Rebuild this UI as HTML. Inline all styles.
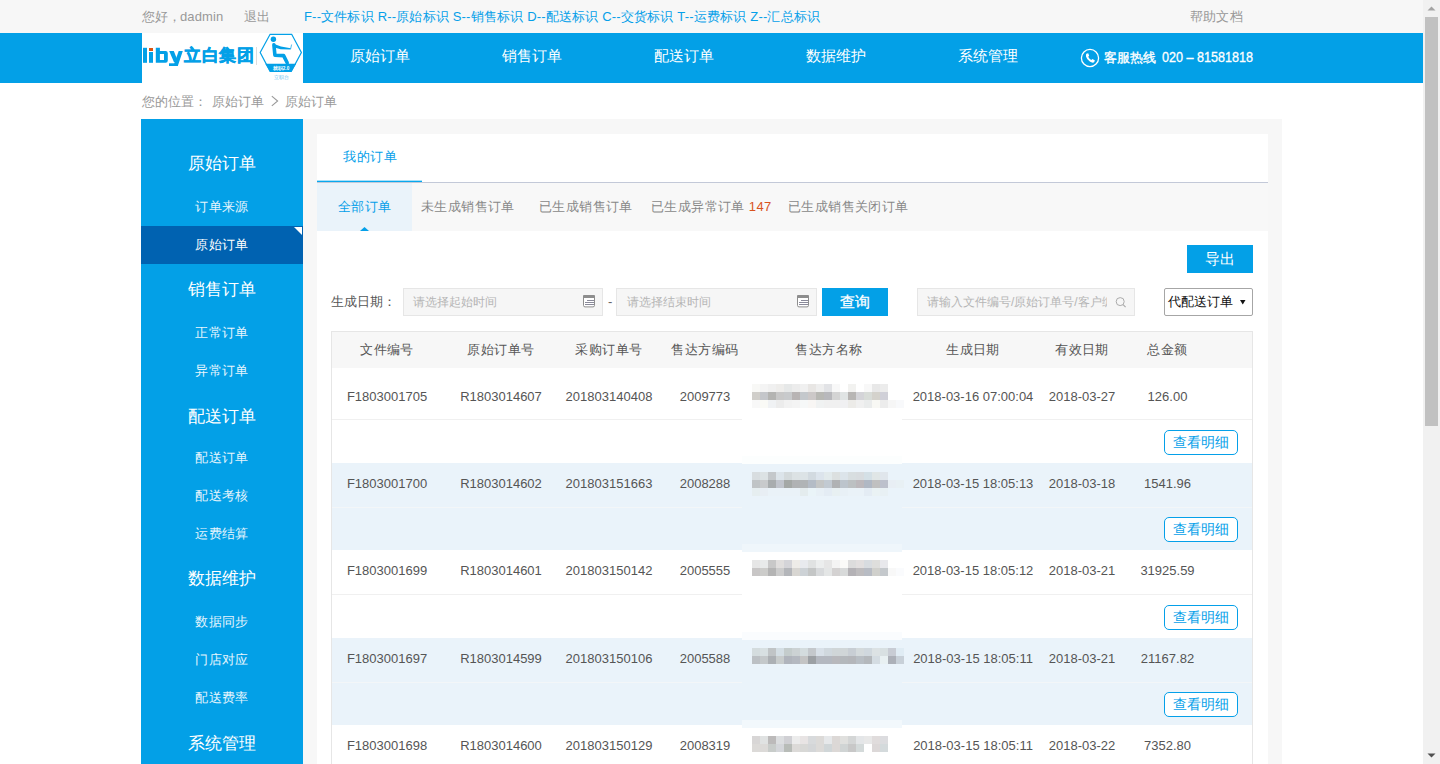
<!DOCTYPE html>
<html><head><meta charset="utf-8">
<style>
*{margin:0;padding:0;box-sizing:border-box}
html,body{width:1440px;height:764px;overflow:hidden;background:#fff;font-family:"Liberation Sans",sans-serif;}
.a{position:absolute;white-space:nowrap;line-height:1}
.b{position:absolute}
#topbar{left:0;top:0;width:1423px;height:33px;background:#f7f7f7}
#nav{left:0;top:33px;width:1423px;height:50px;background:#03a0e7}
#logo{left:142px;top:33px;width:161px;height:50px;background:#fff}
.tt{font-size:13px;color:#999;top:10px;letter-spacing:.18px}
.navi{font-size:15px;color:#fff;top:48px}
.crumb{font-size:13px;color:#999;top:95px}
#side{left:141px;top:119px;width:162px;height:645px;background:#03a0e7}
#main{left:303px;top:119px;width:979px;height:645px;background:#f7f7f7}
#panel{left:317px;top:134px;width:951px;height:630px;background:#fff}
.sh{font-size:17px;color:#fff;left:141px;width:162px;text-align:center}
.si{font-size:13px;color:#e6f5fd;left:141px;width:162px;text-align:center;letter-spacing:.3px}
#scroll{left:1423px;top:0;width:17px;height:764px;background:#f1f1f1}
.st{font-size:13px;color:#888;top:200px;letter-spacing:.4px}
.inp{background:#f6f6f6;border:1px solid #e6e6e6;height:28px;top:288px}
.ph{font-size:12px;color:#b5b5b5;top:296px}
.th{font-size:13px;color:#555;top:343px;text-align:center;letter-spacing:.45px}
.td{font-size:13px;color:#555;text-align:center}
.btn2{left:1164px;width:74px;height:25px;border:1px solid #05a0e9;border-radius:5px;color:#05a0e9;font-size:14px;line-height:23px;text-align:center;background:#fff}
.mz{position:absolute;width:8px;height:8px}
</style></head><body>
<div class="b" id="topbar"></div>
<div class="a tt" style="left:142px">您好，</div><div class="a tt" style="left:180px;letter-spacing:.1px">dadmin</div>
<div class="a tt" style="left:244px">退出</div>
<div class="a tt" style="left:304px;color:#05a0e9">F--文件标识 R--原始标识 S--销售标识 D--配送标识 C--交货标识 T--运费标识 Z--汇总标识</div>
<div class="a tt" style="left:1190px">帮助文档</div>

<div class="b" id="nav"></div>
<div class="b" id="logo"></div>
<svg class="b" style="left:140px;top:42px" width="45" height="28" viewBox="140 42 45 28">
<rect x="143" y="47.8" width="4" height="15" fill="#03a0e7"/>
<rect x="149" y="52" width="4" height="10.8" fill="#03a0e7"/>
<rect x="149" y="48" width="4" height="3" fill="#dd5410"/>
<path d="M155.8 47.8 H159.9 V51 H165.6 Q167.8 51 167.8 53.2 V60.6 Q167.8 62.8 165.6 62.8 H155.8 Z M159.9 54 V59.9 H164 V54 Z" fill="#03a0e7" fill-rule="evenodd"/>
<polygon points="169.2,51 173.8,51 178.3,62.3 174,62.3" fill="#03a0e7"/>
<polygon points="178.7,51 182.8,51 177.8,66 173.4,66" fill="#03a0e7"/>
<rect x="169" y="63.3" width="8.5" height="2.7" fill="#03a0e7"/>
</svg>
<div class="a" style="left:184px;top:46.5px;font-size:16.5px;font-weight:900;color:#03a0e7;letter-spacing:.6px;-webkit-text-stroke:.55px #03a0e7">立白集团</div>
<div class="b" style="left:256px;top:47px;width:1px;height:18px;background:#ddd"></div>
<svg class="b" style="left:255px;top:30px" width="50" height="55" viewBox="255 30 50 55">
<polygon points="270.1,34.3 291.7,34.3 301.4,52.5 291.3,71.4 270.1,71.4 260.2,52.5" fill="none" stroke="#03a0e7" stroke-width="1.2"/>
<polygon points="265.2,63.8 296.2,63.8 291.3,71.4 270.1,71.4" fill="#03a0e7"/>
<circle cx="273.4" cy="39.2" r="2.7" fill="#03a0e7"/>
<polyline points="273.9,44.8 274.9,55.2 283.6,55.6 287.2,62.8" fill="none" stroke="#03a0e7" stroke-width="3.6" stroke-linejoin="round" stroke-linecap="round"/>
<polygon points="273.5,43.8 281,46.6 290.6,48.2 290.8,49.6 280.6,49.2 274.5,47.4" fill="#03a0e7"/>
<line x1="290.6" y1="49" x2="291.6" y2="44.5" stroke="#03a0e7" stroke-width="0.7"/>
<text x="281" y="69.6" font-size="4.6" fill="#fff" text-anchor="middle" font-family="Liberation Sans" font-weight="bold">就职2.0</text>
<text x="281" y="79.4" font-size="5" fill="#5bbcef" text-anchor="middle" font-family="Liberation Sans">立职台</text>
</svg>

<div class="a navi" style="left:350px">原始订单</div>
<div class="a navi" style="left:502px">销售订单</div>
<div class="a navi" style="left:654px">配送订单</div>
<div class="a navi" style="left:806px">数据维护</div>
<div class="a navi" style="left:958px">系统管理</div>
<svg class="b" style="left:1080px;top:48px" width="20" height="20" viewBox="0 0 20 20">
<circle cx="10" cy="10" r="8.6" fill="none" stroke="#fff" stroke-width="1.3"/>
<path d="M6.3 5.8 L8.2 5.2 L9.2 7.8 L8.2 8.7 Q9.3 11 11.3 12 L12.3 11 L14.8 12.2 L14.2 14.2 Q12.5 15.3 9.8 13.6 Q6.8 11.5 6 8.5 Q5.8 6.8 6.3 5.8 Z" fill="#fff"/>
</svg>
<div class="a" style="left:1104px;top:51px;font-size:13px;color:#fff;-webkit-text-stroke:.35px #fff">客服热线</div>
<div class="a" style="left:1162px;top:50px;font-size:14px;color:#fff;transform:scaleX(.9);transform-origin:left;-webkit-text-stroke:.3px #fff">020 – 81581818</div>

<div class="a crumb" style="left:142px">您的位置：</div>
<div class="a crumb" style="left:212px">原始订单</div>
<svg class="b" style="left:270px;top:94px" width="10" height="14"><polyline points="1.8,2.2 7.6,7 1.8,11.8" fill="none" stroke="#999" stroke-width="1.1"/></svg>
<div class="a crumb" style="left:285px">原始订单</div>

<div class="b" id="side"></div>
<div class="a sh" style="top:155px">原始订单</div>
<div class="a si" style="top:200px">订单来源</div>
<div class="b" style="left:141px;top:226px;width:162px;height:38px;background:#0062b1"></div>
<svg class="b" style="left:294px;top:227px" width="8" height="8"><polygon points="0,0 8,0 8,8" fill="#fff"/></svg>
<div class="a si" style="top:238px;color:#fff">原始订单</div>
<div class="a sh" style="top:280.5px">销售订单</div>
<div class="a si" style="top:326px">正常订单</div>
<div class="a si" style="top:364px">异常订单</div>
<div class="a sh" style="top:407.5px">配送订单</div>
<div class="a si" style="top:451px">配送订单</div>
<div class="a si" style="top:489px">配送考核</div>
<div class="a si" style="top:527px">运费结算</div>
<div class="a sh" style="top:570px">数据维护</div>
<div class="a si" style="top:615px">数据同步</div>
<div class="a si" style="top:653px">门店对应</div>
<div class="a si" style="top:691px">配送费率</div>
<div class="a sh" style="top:734.5px">系统管理</div>

<div class="b" id="main"></div>
<div class="b" id="panel"></div>
<!-- tabs -->
<div class="a" style="left:343px;top:150px;font-size:13px;color:#05a0e9;letter-spacing:.5px">我的订单</div>
<div class="b" style="left:317px;top:182px;width:951px;height:1px;background:#c3c9d8"></div>
<div class="b" style="left:317px;top:181px;width:105px;height:1px;background:#08a8ee"></div><div class="b" style="left:317px;top:180px;width:105px;height:1px;background:#08a8ee;opacity:.35"></div>
<div class="b" style="left:317px;top:183px;width:951px;height:48px;background:#f8f8f8"></div>
<div class="b" style="left:317px;top:183px;width:95px;height:48px;background:#eaf3fa"></div>
<svg class="b" style="left:360px;top:227px" width="9" height="4"><polygon points="0,4 4.5,0 9,4" fill="#05a0e9"/></svg>
<div class="a st" style="left:338px;color:#05a0e9">全部订单</div>
<div class="a st" style="left:421px">未生成销售订单</div>
<div class="a st" style="left:539px">已生成销售订单</div>
<div class="a st" style="left:651px">已生成异常订单 <span style="color:#d9531e">147</span></div>
<div class="a st" style="left:788px">已生成销售关闭订单</div>

<!-- toolbar -->
<div class="a" style="left:1187px;top:245px;width:66px;height:28px;background:#03a0e7;color:#fff;font-size:15px;line-height:28px;text-align:center">导出</div>
<div class="a" style="left:331px;top:295px;font-size:13px;color:#555">生成日期：</div>
<div class="b inp" style="left:403px;width:200px"></div>
<div class="a ph" style="left:413px">请选择起始时间</div>
<div class="b inp" style="left:616px;width:201px"></div>
<div class="a ph" style="left:627px">请选择结束时间</div>
<div class="a" style="left:608px;top:295px;font-size:13px;color:#666">-</div>
<svg class="b" style="left:582px;top:294px" width="14" height="14" viewBox="0 0 14 14"><rect x="1.5" y="1.5" width="11" height="11.4" rx="1.5" fill="#fff" stroke="#8e8e8e" stroke-width="1"/><rect x="1" y="1" width="12" height="3" rx="1" fill="#8e8e8e"/><g fill="#8a8a9a"><rect x="5" y="6" width="7" height="1"/><rect x="3" y="8" width="9" height="1"/><rect x="3" y="10" width="9" height="1"/></g></svg>
<svg class="b" style="left:796px;top:294px" width="14" height="14" viewBox="0 0 14 14"><rect x="1.5" y="1.5" width="11" height="11.4" rx="1.5" fill="#fff" stroke="#8e8e8e" stroke-width="1"/><rect x="1" y="1" width="12" height="3" rx="1" fill="#8e8e8e"/><g fill="#8a8a9a"><rect x="5" y="6" width="7" height="1"/><rect x="3" y="8" width="9" height="1"/><rect x="3" y="10" width="9" height="1"/></g></svg>
<div class="a" style="left:822px;top:288px;width:66px;height:28px;background:#03a0e7;color:#fff;font-size:15px;line-height:28px;text-align:center;-webkit-text-stroke:.3px #fff">查询</div>
<div class="b inp" style="left:917px;width:218px"></div>
<div class="a ph" style="left:927px;width:180px;overflow:hidden">请输入文件编号/原始订单号/客户编号</div>
<svg class="b" style="left:1115px;top:296px" width="12" height="12" viewBox="0 0 12 12"><circle cx="5.2" cy="5.6" r="4" fill="none" stroke="#ababab" stroke-width="1"/><line x1="8.1" y1="8.6" x2="10.6" y2="11.2" stroke="#ababab" stroke-width="1.2"/></svg>
<div class="b" style="left:1164px;top:288px;width:89px;height:28px;border:1px solid #a6a6a6;border-radius:2px;background:#fff"></div>
<div class="a" style="left:1168px;top:295px;font-size:13px;color:#111">代配送订单</div>
<svg class="b" style="left:1240px;top:300px" width="6" height="5"><polygon points="0,0 5.5,0 2.75,4.5" fill="#111"/></svg>

<!-- table -->
<div class="b" style="left:331px;top:331px;width:922px;height:433px;border:1px solid #e6e6e6;border-bottom:none;background:#fff"></div>
<div class="b" style="left:332px;top:332px;width:920px;height:36px;background:#f7f7f7"></div>
<div id="rows">
<div class="a th" style="left:307.0px;width:160px">文件编号</div>
<div class="a th" style="left:421.0px;width:160px">原始订单号</div>
<div class="a th" style="left:529.0px;width:160px">采购订单号</div>
<div class="a th" style="left:625.0px;width:160px">售达方编码</div>
<div class="a th" style="left:749.0px;width:160px">售达方名称</div>
<div class="a th" style="left:893.0px;width:160px">生成日期</div>
<div class="a th" style="left:1002.0px;width:160px">有效日期</div>
<div class="a th" style="left:1087.5px;width:160px">总金额</div>
<div class="b" style="left:332px;top:368px;width:920px;height:95px;background:#fff"></div>
<div class="b" style="left:332px;top:419px;width:920px;height:1px;background:#f0f0f0"></div>
<div class="a btn2" style="top:430px">查看明细</div>
<div class="a td" style="left:307.0px;width:160px;top:390px">F1803001705</div>
<div class="a td" style="left:421.0px;width:160px;top:390px">R1803014607</div>
<div class="a td" style="left:529.0px;width:160px;top:390px">201803140408</div>
<div class="a td" style="left:625.0px;width:160px;top:390px">2009773</div>
<div class="a td" style="left:893.0px;width:160px;top:390px">2018-03-16 07:00:04</div>
<div class="a td" style="left:1002.0px;width:160px;top:390px">2018-03-27</div>
<div class="a td" style="left:1087.5px;width:160px;top:390px">126.00</div>
<div class="b" style="left:742px;top:368px;width:160px;height:95px;background:#fff"></div>
<div class="mz" style="left:752px;top:384px;background:#f8f8f6"></div>
<div class="mz" style="left:760px;top:384px;background:#f4f4f4"></div>
<div class="mz" style="left:768px;top:384px;background:#f0f0f0"></div>
<div class="mz" style="left:776px;top:384px;background:#eeedeb"></div>
<div class="mz" style="left:784px;top:384px;background:#e6e8e8"></div>
<div class="mz" style="left:792px;top:384px;background:#ececec"></div>
<div class="mz" style="left:800px;top:384px;background:#f0f0f0"></div>
<div class="mz" style="left:808px;top:384px;background:#e8e6e4"></div>
<div class="mz" style="left:816px;top:384px;background:#eeeeee"></div>
<div class="mz" style="left:824px;top:384px;background:#e2e3e6"></div>
<div class="mz" style="left:832px;top:384px;background:#f8f8f8"></div>
<div class="mz" style="left:840px;top:384px;background:#ffffff"></div>
<div class="mz" style="left:848px;top:384px;background:#f2f2f0"></div>
<div class="mz" style="left:856px;top:384px;background:#ffffff"></div>
<div class="mz" style="left:864px;top:384px;background:#f8f8f8"></div>
<div class="mz" style="left:872px;top:384px;background:#e8e8e8"></div>
<div class="mz" style="left:880px;top:384px;background:#ececec"></div>
<div class="mz" style="left:752px;top:392px;background:#d0ceca"></div>
<div class="mz" style="left:760px;top:392px;background:#c4c6ca"></div>
<div class="mz" style="left:768px;top:392px;background:#b4b4b2"></div>
<div class="mz" style="left:776px;top:392px;background:#c8c8c8"></div>
<div class="mz" style="left:784px;top:392px;background:#c8cacc"></div>
<div class="mz" style="left:792px;top:392px;background:#b8b4b4"></div>
<div class="mz" style="left:800px;top:392px;background:#c4c8cc"></div>
<div class="mz" style="left:808px;top:392px;background:#ccc8c8"></div>
<div class="mz" style="left:816px;top:392px;background:#b8b8b4"></div>
<div class="mz" style="left:824px;top:392px;background:#b8b8bc"></div>
<div class="mz" style="left:832px;top:392px;background:#d4d4d4"></div>
<div class="mz" style="left:840px;top:392px;background:#e0e4e4"></div>
<div class="mz" style="left:848px;top:392px;background:#b8b6b4"></div>
<div class="mz" style="left:856px;top:392px;background:#d4d4d8"></div>
<div class="mz" style="left:864px;top:392px;background:#d8dcd8"></div>
<div class="mz" style="left:872px;top:392px;background:#d4d2cc"></div>
<div class="mz" style="left:880px;top:392px;background:#d0d0d8"></div>
<div class="mz" style="left:752px;top:400px;background:#f8f8f8"></div>
<div class="mz" style="left:760px;top:400px;background:#fafaf6"></div>
<div class="mz" style="left:768px;top:400px;background:#f0f2f4"></div>
<div class="mz" style="left:776px;top:400px;background:#ececec"></div>
<div class="mz" style="left:784px;top:400px;background:#f2f2f2"></div>
<div class="mz" style="left:792px;top:400px;background:#f4f4f4"></div>
<div class="mz" style="left:800px;top:400px;background:#f6f8f8"></div>
<div class="mz" style="left:808px;top:400px;background:#f8f6f4"></div>
<div class="mz" style="left:816px;top:400px;background:#f0f2f2"></div>
<div class="mz" style="left:824px;top:400px;background:#f0f0f0"></div>
<div class="mz" style="left:832px;top:400px;background:#f0f0f0"></div>
<div class="mz" style="left:840px;top:400px;background:#f0f0f2"></div>
<div class="mz" style="left:848px;top:400px;background:#ecebe8"></div>
<div class="mz" style="left:856px;top:400px;background:#f0f0f0"></div>
<div class="mz" style="left:864px;top:400px;background:#eaecec"></div>
<div class="mz" style="left:872px;top:400px;background:#f8f8f4"></div>
<div class="mz" style="left:880px;top:400px;background:#ececec"></div>
<div class="mz" style="left:888px;top:400px;background:#f6f6f6"></div>
<div class="mz" style="left:896px;top:400px;background:#f8f9fb"></div>
<div class="b" style="left:332px;top:463px;width:920px;height:87px;background:#eaf3fa"></div>
<div class="b" style="left:332px;top:507px;width:920px;height:1px;background:#f3f6f8"></div>
<div class="a btn2" style="top:517px">查看明细</div>
<div class="a td" style="left:307.0px;width:160px;top:477px">F1803001700</div>
<div class="a td" style="left:421.0px;width:160px;top:477px">R1803014602</div>
<div class="a td" style="left:529.0px;width:160px;top:477px">201803151663</div>
<div class="a td" style="left:625.0px;width:160px;top:477px">2008288</div>
<div class="a td" style="left:893.0px;width:160px;top:477px">2018-03-15 18:05:13</div>
<div class="a td" style="left:1002.0px;width:160px;top:477px">2018-03-18</div>
<div class="a td" style="left:1087.5px;width:160px;top:477px">1541.96</div>
<div class="b" style="left:742px;top:463px;width:160px;height:87px;background:#eaf3fa"></div>
<div class="mz" style="left:752px;top:472px;background:#d8dde0"></div>
<div class="mz" style="left:760px;top:472px;background:#dce2e4"></div>
<div class="mz" style="left:768px;top:472px;background:#c4c8cb"></div>
<div class="mz" style="left:776px;top:472px;background:#dce4ea"></div>
<div class="mz" style="left:784px;top:472px;background:#d4dadc"></div>
<div class="mz" style="left:792px;top:472px;background:#dce2e4"></div>
<div class="mz" style="left:800px;top:472px;background:#dce3e6"></div>
<div class="mz" style="left:808px;top:472px;background:#d2dae0"></div>
<div class="mz" style="left:816px;top:472px;background:#dce4ec"></div>
<div class="mz" style="left:824px;top:472px;background:#e2eaec"></div>
<div class="mz" style="left:832px;top:472px;background:#dce0e0"></div>
<div class="mz" style="left:840px;top:472px;background:#dce4ea"></div>
<div class="mz" style="left:848px;top:472px;background:#d8dee0"></div>
<div class="mz" style="left:856px;top:472px;background:#d8dcdf"></div>
<div class="mz" style="left:864px;top:472px;background:#d4e0e6"></div>
<div class="mz" style="left:872px;top:472px;background:#e0e6e6"></div>
<div class="mz" style="left:880px;top:472px;background:#e0e6ec"></div>
<div class="mz" style="left:752px;top:480px;background:#c0c4c6"></div>
<div class="mz" style="left:760px;top:480px;background:#c8cacc"></div>
<div class="mz" style="left:768px;top:480px;background:#a8acae"></div>
<div class="mz" style="left:776px;top:480px;background:#c0c4cc"></div>
<div class="mz" style="left:784px;top:480px;background:#a4a8a6"></div>
<div class="mz" style="left:792px;top:480px;background:#b0b2b4"></div>
<div class="mz" style="left:800px;top:480px;background:#b0b4b6"></div>
<div class="mz" style="left:808px;top:480px;background:#b4bcc6"></div>
<div class="mz" style="left:816px;top:480px;background:#c4c6c6"></div>
<div class="mz" style="left:824px;top:480px;background:#c2cad2"></div>
<div class="mz" style="left:832px;top:480px;background:#b0b2b4"></div>
<div class="mz" style="left:840px;top:480px;background:#bcc4cc"></div>
<div class="mz" style="left:848px;top:480px;background:#bcc0c2"></div>
<div class="mz" style="left:856px;top:480px;background:#bcb8bc"></div>
<div class="mz" style="left:864px;top:480px;background:#b0b8c4"></div>
<div class="mz" style="left:872px;top:480px;background:#c0c0c0"></div>
<div class="mz" style="left:880px;top:480px;background:#bcc0cc"></div>
<div class="mz" style="left:888px;top:480px;background:#e8eef4"></div>
<div class="mz" style="left:896px;top:480px;background:#e8f0f4"></div>
<div class="mz" style="left:752px;top:488px;background:#e6eef0"></div>
<div class="mz" style="left:760px;top:488px;background:#e8eef4"></div>
<div class="mz" style="left:768px;top:488px;background:#eaf2f8"></div>
<div class="mz" style="left:776px;top:488px;background:#eaf2f8"></div>
<div class="mz" style="left:784px;top:488px;background:#eaf2f8"></div>
<div class="mz" style="left:792px;top:488px;background:#eaf2f8"></div>
<div class="mz" style="left:800px;top:488px;background:#e4ecee"></div>
<div class="mz" style="left:808px;top:488px;background:#eaf4f8"></div>
<div class="mz" style="left:816px;top:488px;background:#e8f0f6"></div>
<div class="mz" style="left:824px;top:488px;background:#e4ecf4"></div>
<div class="mz" style="left:832px;top:488px;background:#e8f0f2"></div>
<div class="mz" style="left:840px;top:488px;background:#e8f0f6"></div>
<div class="mz" style="left:848px;top:488px;background:#eaf2f8"></div>
<div class="mz" style="left:856px;top:488px;background:#eaf2f8"></div>
<div class="mz" style="left:864px;top:488px;background:#e4ecf4"></div>
<div class="mz" style="left:872px;top:488px;background:#eaf2f4"></div>
<div class="mz" style="left:880px;top:488px;background:#e8f0f4"></div>
<div class="b" style="left:332px;top:550px;width:920px;height:88px;background:#fff"></div>
<div class="b" style="left:332px;top:594px;width:920px;height:1px;background:#f0f0f0"></div>
<div class="a btn2" style="top:605px">查看明细</div>
<div class="a td" style="left:307.0px;width:160px;top:564px">F1803001699</div>
<div class="a td" style="left:421.0px;width:160px;top:564px">R1803014601</div>
<div class="a td" style="left:529.0px;width:160px;top:564px">201803150142</div>
<div class="a td" style="left:625.0px;width:160px;top:564px">2005555</div>
<div class="a td" style="left:893.0px;width:160px;top:564px">2018-03-15 18:05:12</div>
<div class="a td" style="left:1002.0px;width:160px;top:564px">2018-03-21</div>
<div class="a td" style="left:1087.5px;width:160px;top:564px">31925.59</div>
<div class="b" style="left:742px;top:550px;width:160px;height:88px;background:#fff"></div>
<div class="mz" style="left:752px;top:560px;background:#e6e6e6"></div>
<div class="mz" style="left:760px;top:560px;background:#e8eaea"></div>
<div class="mz" style="left:768px;top:560px;background:#c8c8c8"></div>
<div class="mz" style="left:776px;top:560px;background:#e0dedd"></div>
<div class="mz" style="left:784px;top:560px;background:#d4d4d8"></div>
<div class="mz" style="left:792px;top:560px;background:#eeece8"></div>
<div class="mz" style="left:800px;top:560px;background:#e8eaee"></div>
<div class="mz" style="left:808px;top:560px;background:#e0e2e2"></div>
<div class="mz" style="left:816px;top:560px;background:#eceeee"></div>
<div class="mz" style="left:824px;top:560px;background:#e6e6e6"></div>
<div class="mz" style="left:832px;top:560px;background:#f4f4f4"></div>
<div class="mz" style="left:840px;top:560px;background:#fafaf8"></div>
<div class="mz" style="left:848px;top:560px;background:#dcdcdc"></div>
<div class="mz" style="left:856px;top:560px;background:#e2dfdf"></div>
<div class="mz" style="left:864px;top:560px;background:#d8dce0"></div>
<div class="mz" style="left:872px;top:560px;background:#dededc"></div>
<div class="mz" style="left:880px;top:560px;background:#e8e8ec"></div>
<div class="mz" style="left:752px;top:568px;background:#c8c6c6"></div>
<div class="mz" style="left:760px;top:568px;background:#ccccca"></div>
<div class="mz" style="left:768px;top:568px;background:#b4b4b4"></div>
<div class="mz" style="left:776px;top:568px;background:#cccccc"></div>
<div class="mz" style="left:784px;top:568px;background:#b4b6ba"></div>
<div class="mz" style="left:792px;top:568px;background:#d8d6d2"></div>
<div class="mz" style="left:800px;top:568px;background:#cdd2d6"></div>
<div class="mz" style="left:808px;top:568px;background:#c4c6c6"></div>
<div class="mz" style="left:816px;top:568px;background:#d8dadc"></div>
<div class="mz" style="left:824px;top:568px;background:#e4e6e6"></div>
<div class="mz" style="left:832px;top:568px;background:#d4d2d2"></div>
<div class="mz" style="left:840px;top:568px;background:#d8dada"></div>
<div class="mz" style="left:848px;top:568px;background:#b4b2b6"></div>
<div class="mz" style="left:856px;top:568px;background:#bebcbe"></div>
<div class="mz" style="left:864px;top:568px;background:#b8bcc4"></div>
<div class="mz" style="left:872px;top:568px;background:#d0d0cc"></div>
<div class="mz" style="left:880px;top:568px;background:#c4c8cc"></div>
<div class="mz" style="left:888px;top:568px;background:#f8f8f8"></div>
<div class="mz" style="left:896px;top:568px;background:#fafbfd"></div>
<div class="b" style="left:332px;top:638px;width:920px;height:87px;background:#eaf3fa"></div>
<div class="b" style="left:332px;top:682px;width:920px;height:1px;background:#f3f6f8"></div>
<div class="a btn2" style="top:692px">查看明细</div>
<div class="a td" style="left:307.0px;width:160px;top:652px">F1803001697</div>
<div class="a td" style="left:421.0px;width:160px;top:652px">R1803014599</div>
<div class="a td" style="left:529.0px;width:160px;top:652px">201803150106</div>
<div class="a td" style="left:625.0px;width:160px;top:652px">2005588</div>
<div class="a td" style="left:893.0px;width:160px;top:652px">2018-03-15 18:05:11</div>
<div class="a td" style="left:1002.0px;width:160px;top:652px">2018-03-21</div>
<div class="a td" style="left:1087.5px;width:160px;top:652px">21167.82</div>
<div class="b" style="left:742px;top:638px;width:160px;height:87px;background:#eaf3fa"></div>
<div class="mz" style="left:752px;top:648px;background:#d4dcde"></div>
<div class="mz" style="left:760px;top:648px;background:#d8e0e2"></div>
<div class="mz" style="left:768px;top:648px;background:#c0c4c6"></div>
<div class="mz" style="left:776px;top:648px;background:#d4dee4"></div>
<div class="mz" style="left:784px;top:648px;background:#c4cccc"></div>
<div class="mz" style="left:792px;top:648px;background:#ccd2d4"></div>
<div class="mz" style="left:800px;top:648px;background:#d4dcde"></div>
<div class="mz" style="left:808px;top:648px;background:#c4c8cc"></div>
<div class="mz" style="left:816px;top:648px;background:#d8e0e8"></div>
<div class="mz" style="left:824px;top:648px;background:#d0d8de"></div>
<div class="mz" style="left:832px;top:648px;background:#d0d6d8"></div>
<div class="mz" style="left:840px;top:648px;background:#d0d6d8"></div>
<div class="mz" style="left:848px;top:648px;background:#c8ced4"></div>
<div class="mz" style="left:856px;top:648px;background:#d4dadc"></div>
<div class="mz" style="left:864px;top:648px;background:#d0d8de"></div>
<div class="mz" style="left:872px;top:648px;background:#dce2e4"></div>
<div class="mz" style="left:880px;top:648px;background:#d8e0e2"></div>
<div class="mz" style="left:888px;top:648px;background:#c8ccd4"></div>
<div class="mz" style="left:896px;top:648px;background:#e0ecf4"></div>
<div class="mz" style="left:752px;top:656px;background:#bcc0c4"></div>
<div class="mz" style="left:760px;top:656px;background:#c4c8ca"></div>
<div class="mz" style="left:768px;top:656px;background:#acb0b4"></div>
<div class="mz" style="left:776px;top:656px;background:#c8cccc"></div>
<div class="mz" style="left:784px;top:656px;background:#b0b4bc"></div>
<div class="mz" style="left:792px;top:656px;background:#b4b8c0"></div>
<div class="mz" style="left:800px;top:656px;background:#c4c4c4"></div>
<div class="mz" style="left:808px;top:656px;background:#9ca0a4"></div>
<div class="mz" style="left:816px;top:656px;background:#b4b8c0"></div>
<div class="mz" style="left:824px;top:656px;background:#b4b8c0"></div>
<div class="mz" style="left:832px;top:656px;background:#b8b8bc"></div>
<div class="mz" style="left:840px;top:656px;background:#b4b8bc"></div>
<div class="mz" style="left:848px;top:656px;background:#b4b6ba"></div>
<div class="mz" style="left:856px;top:656px;background:#b8bec4"></div>
<div class="mz" style="left:864px;top:656px;background:#b4b8bc"></div>
<div class="mz" style="left:872px;top:656px;background:#d4dce2"></div>
<div class="mz" style="left:880px;top:656px;background:#e8f0f2"></div>
<div class="mz" style="left:888px;top:656px;background:#acb0b8"></div>
<div class="mz" style="left:896px;top:656px;background:#c8d0d8"></div>
<div class="b" style="left:332px;top:725px;width:920px;height:39px;background:#fff"></div>
<div class="a td" style="left:307.0px;width:160px;top:739px">F1803001698</div>
<div class="a td" style="left:421.0px;width:160px;top:739px">R1803014600</div>
<div class="a td" style="left:529.0px;width:160px;top:739px">201803150129</div>
<div class="a td" style="left:625.0px;width:160px;top:739px">2008319</div>
<div class="a td" style="left:893.0px;width:160px;top:739px">2018-03-15 18:05:11</div>
<div class="a td" style="left:1002.0px;width:160px;top:739px">2018-03-22</div>
<div class="a td" style="left:1087.5px;width:160px;top:739px">7352.80</div>
<div class="b" style="left:742px;top:725px;width:160px;height:39px;background:#fff"></div>
<div class="mz" style="left:752px;top:736px;background:#d8d6d6"></div>
<div class="mz" style="left:760px;top:736px;background:#e0e2e2"></div>
<div class="mz" style="left:768px;top:736px;background:#bcbaba"></div>
<div class="mz" style="left:776px;top:736px;background:#dcdee0"></div>
<div class="mz" style="left:784px;top:736px;background:#d0d0d4"></div>
<div class="mz" style="left:792px;top:736px;background:#ececec"></div>
<div class="mz" style="left:800px;top:736px;background:#e8e4e4"></div>
<div class="mz" style="left:808px;top:736px;background:#d8dadc"></div>
<div class="mz" style="left:816px;top:736px;background:#dcdad8"></div>
<div class="mz" style="left:824px;top:736px;background:#e6e8ea"></div>
<div class="mz" style="left:832px;top:736px;background:#dcd8d6"></div>
<div class="mz" style="left:840px;top:736px;background:#e0e0de"></div>
<div class="mz" style="left:848px;top:736px;background:#d4d6d6"></div>
<div class="mz" style="left:856px;top:736px;background:#e4e6e8"></div>
<div class="mz" style="left:864px;top:736px;background:#e8e8e8"></div>
<div class="mz" style="left:872px;top:736px;background:#e0dcdc"></div>
<div class="mz" style="left:880px;top:736px;background:#dcdcdf"></div>
<div class="mz" style="left:752px;top:744px;background:#dcdad8"></div>
<div class="mz" style="left:760px;top:744px;background:#dcdad8"></div>
<div class="mz" style="left:768px;top:744px;background:#c8ccca"></div>
<div class="mz" style="left:776px;top:744px;background:#d4d6da"></div>
<div class="mz" style="left:784px;top:744px;background:#b8bcb8"></div>
<div class="mz" style="left:792px;top:744px;background:#dcdad8"></div>
<div class="mz" style="left:800px;top:744px;background:#d8d8d6"></div>
<div class="mz" style="left:808px;top:744px;background:#d4d6d8"></div>
<div class="mz" style="left:816px;top:744px;background:#dcdad8"></div>
<div class="mz" style="left:824px;top:744px;background:#d0d6d8"></div>
<div class="mz" style="left:832px;top:744px;background:#dcd8d6"></div>
<div class="mz" style="left:840px;top:744px;background:#d0d4d4"></div>
<div class="mz" style="left:848px;top:744px;background:#c8c8c8"></div>
<div class="mz" style="left:856px;top:744px;background:#d4dada"></div>
<div class="mz" style="left:864px;top:744px;background:#ffffff"></div>
<div class="mz" style="left:872px;top:744px;background:#dcd8d8"></div>
<div class="mz" style="left:880px;top:744px;background:#d4dadc"></div>
<div class="b" style="left:742px;top:456px;width:160px;height:8px;background:#fcfefe"></div>
<div class="b" style="left:742px;top:544px;width:160px;height:8px;background:#eff6fb"></div>
<div class="b" style="left:742px;top:632px;width:160px;height:8px;background:#fafcfe"></div>
<div class="b" style="left:742px;top:720px;width:160px;height:8px;background:#f2f8fc"></div>
</div><!--/rows-->

<div class="b" id="scroll"></div>
<div class="b" style="left:1425px;top:17px;width:13px;height:409px;background:#c1c1c1"></div>
<svg class="b" style="left:1423px;top:0" width="17" height="17"><polygon points="4.5,10.5 8.5,6.5 12.5,10.5" fill="#a3a3a3"/></svg>
<svg class="b" style="left:1423px;top:747px" width="17" height="17"><polygon points="4.5,6.5 12.5,6.5 8.5,10.5" fill="#505050"/></svg>
</body></html>
